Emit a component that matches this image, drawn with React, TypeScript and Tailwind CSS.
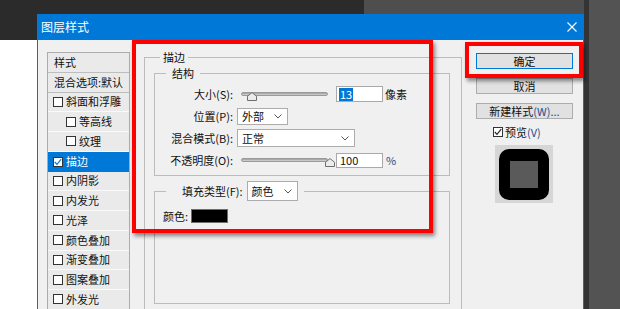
import React from 'react';

const FONT = "font-['Noto_Sans_CJK_SC','Noto_Sans',sans-serif]";

function Check({checked = false, inverted = false}: {checked?: boolean; inverted?: boolean}) {
    return (
        <div className="w-[10px] h-[10px] border border-[#333333] bg-white flex items-center justify-center shrink-0">
            {checked ? (
                <svg width="8" height="8" viewBox="0 0 8 8">
                    <polyline points="0.8,4 3,6.3 7.2,1.2" fill="none" stroke={inverted ? '#0078d7' : '#222222'} strokeWidth="1.1"/>
                </svg>
            ) : null}
        </div>
    );
}

function Chevron() {
    return (
        <svg width="8" height="5" viewBox="0 0 8 5">
            <polyline points="0.5,0.5 4,4 7.5,0.5" fill="none" stroke="#555555" strokeWidth="1"/>
        </svg>
    );
}

function Slider({value, max}: {value: number; max: number}) {
    const left = 2 + (value / max) * 82;
    return (
        <div className="relative w-[87px] h-[16px] ml-[8px]">
            <div className="absolute left-0 right-0 top-[6px] h-[4px] rounded-full border border-[#9a9a9a] bg-linear-to-b from-[#9c9c9c] to-[#d6d6d6]"/>
            <svg className="absolute top-[6px]" style={{left}} width="10" height="9" viewBox="0 0 10 9">
                <polygon points="0.5,8.5 0.5,4.2 5,0.6 9.5,4.2 9.5,8.5" fill="#ececec" stroke="#6f6f6f" strokeWidth="1"/>
            </svg>
        </div>
    );
}

const listItems = [
    {label: '斜面和浮雕', sub: false},
    {label: '等高线', sub: true},
    {label: '纹理', sub: true},
    {label: '描边', sub: false, checked: true, selected: true},
    {label: '内阴影', sub: false},
    {label: '内发光', sub: false},
    {label: '光泽', sub: false},
    {label: '颜色叠加', sub: false},
    {label: '渐变叠加', sub: false},
    {label: '图案叠加', sub: false},
    {label: '外发光', sub: false},
];

function StyleList() {
    return (
        <div className="mt-[12px] w-[83px] self-start shrink-0 border-x border-t border-[#acacac] bg-[#eaeaea] text-[11px] leading-none">
            <div className="h-[19.75px] flex items-center pl-[6px] border-b border-[#bdbdbd]">样式</div>
            <div className="h-[19.75px] flex items-center pl-[6px] border-b border-[#bdbdbd] whitespace-nowrap overflow-hidden">混合选项:默认</div>
            {listItems.map((item) => (
                <div
                    key={item.label}
                    className={
                        (item.selected ? 'bg-[#0078d7] text-white ' : 'border-b border-[#fafafa] ') +
                        (item.sub ? 'pl-[18px] ' : 'pl-[5px] ') +
                        'h-[19.75px] flex items-center gap-[3px] whitespace-nowrap'
                    }
                >
                    <Check checked={!!item.checked} inverted={!!item.selected}/>
                    <span>{item.label}</span>
                </div>
            ))}
        </div>
    );
}

function StrokePanel() {
    return (
        <fieldset className="ml-[14px] mt-[9px] w-[318px] h-[300px] border border-[#bcbcbc] pl-[9px] min-w-0 shrink-0 text-[11px] leading-none">
            <legend className="ml-[6px] px-[3px] leading-[16px]">描边</legend>

            <fieldset className="w-[296px] border border-[#bcbcbc] pt-[2px] pb-[4px] min-w-0">
                <legend className="ml-[11px] px-[6px] leading-[16px]">结构</legend>

                <div className="h-[22px] flex items-center">
                    <div className="w-[78px] text-right">大小(S):</div>
                    <Slider value={13} max={250}/>
                    <div className="ml-[8px] w-[47px] h-[16px] border border-[#a9a9a9] bg-white flex items-center pl-[2px]">
                        <span className="bg-[#0078d7] text-white h-[13px] px-[1px] flex items-center">13</span>
                    </div>
                    <span className="ml-[2px]">像素</span>
                </div>

                <div className="h-[22px] flex items-center">
                    <div className="w-[78px] text-right">位置(P):</div>
                    <div className="ml-[4px] w-[51px] h-[17px] border border-[#acacac] bg-white flex items-center justify-between pl-[4px] pr-[5px]">
                        <span>外部</span>
                        <Chevron/>
                    </div>
                </div>

                <div className="h-[22px] flex items-center">
                    <div className="w-[78px] text-right whitespace-nowrap">混合模式(B):</div>
                    <div className="ml-[4px] w-[118px] h-[18px] border border-[#acacac] bg-white flex items-center justify-between pl-[4px] pr-[5px]">
                        <span>正常</span>
                        <Chevron/>
                    </div>
                </div>

                <div className="h-[22px] flex items-center">
                    <div className="w-[78px] text-right whitespace-nowrap">不透明度(O):</div>
                    <Slider value={100} max={100}/>
                    <div className="ml-[8px] w-[47px] h-[15px] border border-[#a9a9a9] bg-white flex items-center pl-[3px]">
                        100
                    </div>
                    <span className="ml-[3px] text-[#2c4a8c]">%</span>
                </div>
            </fieldset>

            <fieldset className="mt-[5px] w-[296px] h-[123px] border border-[#bcbcbc] pt-[4px] min-w-0">
                <legend className="ml-[11px] pl-[16px] pr-[6px] flex items-center">
                    <span className="whitespace-nowrap">填充类型(F):</span>
                    <div className="ml-[4px] w-[51px] h-[20px] border border-[#acacac] bg-white flex items-center justify-between pl-[4px] pr-[5px]">
                        <span>颜色</span>
                        <Chevron/>
                    </div>
                </legend>
                <div className="h-[22px] flex items-center pl-[8px]">
                    <span>颜色:</span>
                    <div className="ml-[3px] w-[37px] h-[14px] bg-black border border-[#6d6d6d]"/>
                </div>
            </fieldset>
        </fieldset>
    );
}

function RightPanel() {
    return (
        <div className="ml-[14px] mt-[13px] w-[97px] self-start flex flex-col text-[11px] leading-none shrink-0">
            <button className="h-[16px] bg-[#e1e1e1] border border-[#0078d7] flex items-center justify-center">确定</button>
            <button className="mt-[9px] h-[16px] bg-[#e1e1e1] border border-[#adadad] flex items-center justify-center">取消</button>
            <button className="mt-[9px] h-[16px] bg-[#e1e1e1] border border-[#adadad] flex items-center justify-center whitespace-nowrap">
                新建样式<span className="text-[#2c4a8c]">(W)...</span>
            </button>
            <div className="mt-[6px] h-[14px] flex items-center gap-[2px] pl-[17px]">
                <Check checked/>
                <span>预览<span className="text-[#2c4a8c]">(V)</span></span>
            </div>
            <div className="mt-[6px] ml-[19px] w-[58px] h-[58px] bg-[#d6d6d6] flex items-center justify-center">
                <div className="w-[50px] h-[51px] rounded-[10px] bg-black flex items-center justify-center">
                    <div className="w-[28px] h-[27px] bg-[#5a5a5a]"/>
                </div>
            </div>
        </div>
    );
}

export default function App() {
    return (
        <div className={`relative w-[620px] h-[309px] overflow-hidden flex bg-[#535353] text-[#111111] ${FONT}`}>
            <div className="w-[37px] shrink-0 flex flex-col">
                <div className="h-[40px] shrink-0 bg-[#2b2b2b]"/>
                <div className="flex-1 bg-white"/>
            </div>

            <div className="w-[547px] shrink-0 flex flex-col min-h-0">
                <div className="h-[14px] shrink-0 flex">
                    <div className="w-[327px] bg-[#2b2b2b]"/>
                    <div className="flex-1 bg-[#4e4e4e]"/>
                </div>

                {/* dialog */}
                <div className="flex-1 min-h-0 overflow-hidden flex flex-col border-x border-[#0078d7] bg-[#f0f0f0]">
                    <div className="h-[26px] shrink-0 bg-[#0078d7] flex items-center justify-between pl-[3px] pr-[6px] text-white text-[12px]">
                        <span>图层样式</span>
                        <svg width="10" height="10" viewBox="0 0 10 10">
                            <path d="M0.5 0.5 L9.5 9.5 M9.5 0.5 L0.5 9.5" stroke="#ffffff" strokeWidth="1.1"/>
                        </svg>
                    </div>
                    <div className="flex-1 min-h-0 flex items-start pl-[9px]">
                        <StyleList/>
                        <StrokePanel/>
                        <RightPanel/>
                    </div>
                </div>
            </div>

            <div className="w-[5px] shrink-0 bg-[#343434]"/>
            <div className="flex-1"/>

            {/* red annotation frames */}
            <div className="absolute left-[132px] top-[40px] w-[301px] h-[193px] border-[4px] border-[#ff0000] shadow-[2px_3px_4px_rgba(0,0,0,0.45)] pointer-events-none"/>
            <div className="absolute left-[465px] top-[42px] w-[118px] h-[36px] border-[4px] border-[#ff0000] shadow-[2px_3px_4px_rgba(0,0,0,0.45)] pointer-events-none"/>
        </div>
    );
}
